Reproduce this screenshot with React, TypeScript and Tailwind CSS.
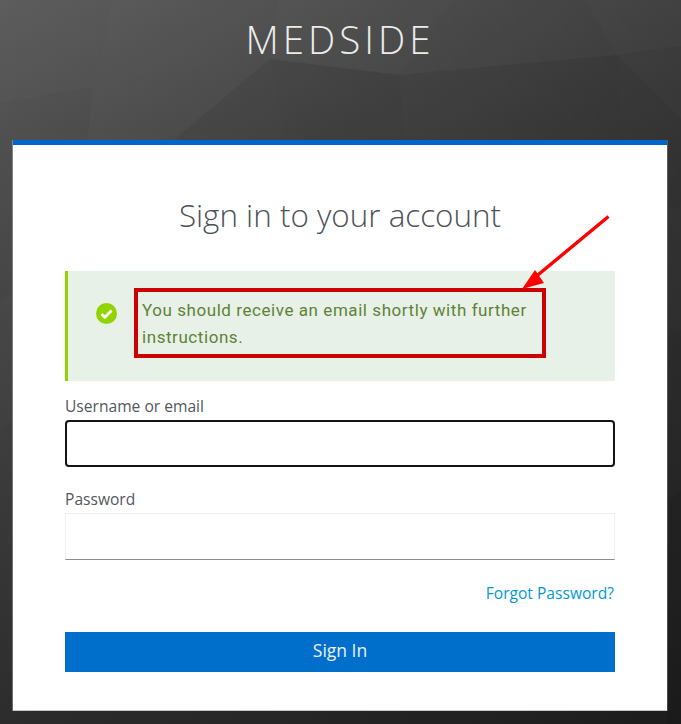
import React from 'react';

const FONT = 'font-["Open_Sans",sans-serif]';

// faceted backdrop: each facet is a translucent tint over the dark gradient
const FACETS = [
  { points: '0,0 113,0 93,87 0,103', fill: 'white', opacity: 0.012 },
  { points: '113,0 278,0 270,59 93,87', fill: 'white', opacity: 0.02 },
  { points: '93,87 270,59 174,140 87,140', fill: 'white', opacity: 0.02 },
  { points: '278,0 454,0 400,75 270,59', fill: 'white', opacity: 0.03 },
  { points: '270,59 400,75 374,140 285,140', fill: 'black', opacity: 0.03 },
  { points: '174,140 270,59 285,140', fill: 'black', opacity: 0.02 },
  { points: '454,0 585,0 617,55 400,75', fill: 'white', opacity: 0.025 },
  { points: '400,75 617,55 622,140 404,140', fill: 'black', opacity: 0.012 },
  { points: '400,75 404,140 374,140', fill: 'black', opacity: 0.03 },
  { points: '585,0 681,0 681,4 617,55', fill: 'white', opacity: 0.035 },
  { points: '681,4 681,46 617,55', fill: 'white', opacity: 0.035 },
  { points: '617,55 681,46 681,120', fill: 'white', opacity: 0.015 },
  // facets showing in the gutters beside the card
  { points: '0,300 13,292 13,420 0,430', fill: 'white', opacity: 0.012 },
  { points: '667,210 681,205 681,330 667,336', fill: 'white', opacity: 0.012 },
  { points: '667,500 681,490 681,724 667,724', fill: 'black', opacity: 0.06 },
];

function Backdrop() {
  return (
    <svg className="absolute inset-0 h-full w-full" viewBox="0 0 681 724" preserveAspectRatio="none">
      <defs>
        <linearGradient id="bg" x1="0" y1="0" x2="0" y2="1">
          <stop offset="0" stopColor="#5c5c5c" />
          <stop offset="0.18" stopColor="#505050" />
          <stop offset="0.42" stopColor="#454545" />
          <stop offset="1" stopColor="#2c2c2c" />
        </linearGradient>
        <linearGradient id="shade" x1="0" y1="0" x2="1" y2="0">
          <stop offset="0" stopColor="#000" stopOpacity="0" />
          <stop offset="1" stopColor="#000" stopOpacity="0.36" />
        </linearGradient>
      </defs>
      <rect width="681" height="724" fill="url(#bg)" />
      <rect width="681" height="724" fill="url(#shade)" />
      {FACETS.map((f) => (
        <polygon key={f.points} points={f.points} fill={f.fill} opacity={f.opacity} />
      ))}
    </svg>
  );
}

function CheckCircle() {
  return (
    <svg viewBox="0 0 20 20" className="h-[21px] w-[21px] shrink-0">
      <circle cx="10" cy="10" r="10" fill="#92d400" />
      <path d="M5.2 10.4 8.4 13.5 14.8 7.2" fill="none" stroke="#fff" strokeWidth="2.7" />
    </svg>
  );
}

export default function App() {
  return (
    <div className={`relative h-[724px] w-[681px] overflow-hidden ${FONT}`}>
      <Backdrop />

      <div className="relative pr-[14px] pl-[13px]">
        <h1 className="h-[140px] pt-[15px] text-center text-[38.5px] leading-[48px] font-light tracking-[0.105em] text-[#ececec]">
          MEDSIDE
        </h1>

        <div className="h-[571px] border-t-[5px] border-b border-t-[#0066cc] border-b-[#c8c8c8] bg-white px-[52px] shadow-[1px_0_0_rgba(255,255,255,0.2),-1px_0_0_rgba(255,255,255,0.3)]">
          <h2 className="pt-[49px] pb-[1px] text-center text-[31.4px] leading-[42px] font-light text-[#4d5258]">
            Sign in to your account
          </h2>

          {/* Success alert, with the red annotation box laid over its text */}
          <div className="relative mt-[34px] flex h-[110px] border-l-[3px] border-l-[#92d400] bg-[#e7f1e8] pt-[32px] pl-[28px]">
            <div>
              <CheckCircle />
            </div>
            <p className="-mt-[6px] ml-[25px] w-[410px] font-['Roboto',sans-serif] text-[17px] leading-[27px] tracking-[0.033em] text-[#5f8236]">
              You should receive an email shortly with further instructions.
            </p>
            <div className="absolute top-[17px] left-[66px] h-[70px] w-[412px] border-4 border-[#cc0000]" />
          </div>

          <label className="mt-[15px] block text-[15.6px] leading-[21px] text-[#53585e]">Username or email</label>
          <div className="mt-[3px] h-[47px] rounded-[4px] border-2 border-[#151515] bg-white" />

          <label className="mt-[22px] block text-[15.6px] leading-[21px] text-[#53585e]">Password</label>
          <div className="mt-[3px] h-[47px] border border-[#f0f0f0] border-b-[#8a8d90] bg-white" />

          <div className="mt-[23px] pr-[1px] text-right text-[15.6px] leading-[21px] text-[#0099d3]">Forgot Password?</div>

          <button className="mt-[28px] flex h-[40px] w-full justify-center bg-[#006fcc] pt-[5px] text-[17.5px] leading-[26px] text-[#f0f0f0]">
            Sign In
          </button>
        </div>
      </div>

      {/* Red annotation arrow */}
      <svg className="absolute top-0 left-0 h-[724px] w-[681px]" viewBox="0 0 681 724">
        <path d="M608.5 216.5 533 279" stroke="#ff0000" strokeWidth="3.4" fill="none" />
        <polygon points="522,289 535,270 544,283" fill="#ff0000" />
      </svg>
    </div>
  );
}
